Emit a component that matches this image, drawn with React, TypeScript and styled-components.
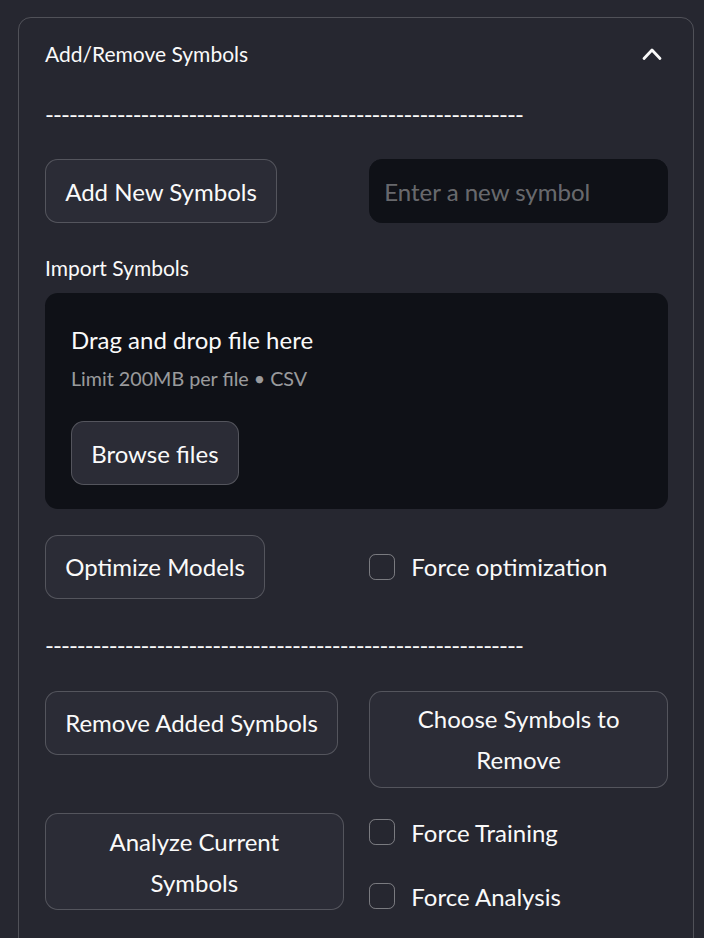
import React from "react";
import styled, { createGlobalStyle } from "styled-components";

const GlobalStyle = createGlobalStyle`
  html, body {
    margin: 0;
    padding: 0;
    background: #262730;
  }
  * { box-sizing: border-box; }
`;

const FONT = `"Lato", "Liberation Sans", sans-serif`;

const Page = styled.div`
  background: #262730;
  padding: 17px 10px 0 18px;
  font-family: ${FONT};
  color: rgb(250, 250, 250);
  min-height: 938px;
`;

const Expander = styled.section`
  border: 1px solid rgba(250, 250, 250, 0.2);
  border-radius: 12.8px;
`;

const Header = styled.div`
  height: 71px;
  padding: 0 31px 0 26px;
  display: flex;
  align-items: center;
  justify-content: space-between;
  font-size: 21px;
  line-height: 1;
`;

const Body = styled.div`
  padding: 3.5px 25px 48px 26px;
  display: flex;
  flex-direction: column;
  gap: 25.6px;
`;

const Dashes = styled.p`
  margin: 0;
  font-size: 24px;
  line-height: 41px;
  height: 41px;
  letter-spacing: -0.95px;
  white-space: nowrap;
  overflow: hidden;
`;

const Row = styled.div<{ $align?: string }>`
  display: grid;
  grid-template-columns: 1fr 1fr;
  column-gap: 25.6px;
  align-items: ${(p) => p.$align || "start"};
`;

const Cell = styled.div`
  display: flex;
  flex-direction: column;
  gap: 25.6px;
  min-width: 0;
`;

const Button = styled.button<{ $full?: boolean }>`
  font-family: ${FONT};
  font-size: 24px;
  line-height: 41px;
  color: rgb(250, 250, 250);
  background: #2b2c36;
  border: 1px solid rgba(250, 250, 250, 0.2);
  border-radius: 12.8px;
  min-height: 64px;
  padding: 6.4px 19.2px;
  text-align: center;
  align-self: flex-start;
  width: ${(p) => (p.$full ? "100%" : "auto")};
  max-width: 100%;
`;

const Input = styled.input`
  font-family: ${FONT};
  font-size: 24px;
  height: 64px;
  width: 100%;
  background: #0f1117;
  border: 1px solid #0f1117;
  border-radius: 12.8px;
  padding: 0 14px;
  color: rgb(250, 250, 250);
  outline: none;
  &::placeholder {
    color: rgba(250, 250, 250, 0.4);
  }
`;

const Uploader = styled.div`
  display: flex;
  flex-direction: column;
`;

const Label = styled.label`
  font-size: 21px;
  height: 38.4px;
  margin-bottom: 6.4px;
  display: flex;
  align-items: center;
`;

const Dropzone = styled.div`
  background: #0f1117;
  border-radius: 12.8px;
  padding: 25.6px 26px 24px;
  display: flex;
  flex-direction: column;
  align-items: flex-start;
`;

const DropTitle = styled.div`
  font-size: 24px;
  line-height: 41px;
`;

const DropHint = styled.div`
  font-size: 19.7px;
  line-height: 38px;
  color: rgba(250, 250, 250, 0.6);
  margin-bottom: 23px;
`;

const CheckRow = styled.label`
  display: flex;
  align-items: center;
  gap: 16px;
  height: 38.4px;
  font-size: 24px;
`;

const Box = styled.span`
  width: 26px;
  height: 26px;
  border: 1.5px solid rgba(250, 250, 250, 0.4);
  border-radius: 6.4px;
  flex: none;
`;

const Chevron = () => (
  <svg width="20" height="14" viewBox="0 0 20 14" fill="none">
    <polyline
      points="2,11.5 10,3 18,11.5"
      stroke="#fafafa"
      strokeWidth="2.8"
      strokeLinecap="round"
      strokeLinejoin="round"
    />
  </svg>
);

const Checkbox = ({ label }: { label: string }) => (
  <CheckRow>
    <Box />
    {label}
  </CheckRow>
);

const DASHES = "-".repeat(60);

export default function App() {
  return (
    <>
      <GlobalStyle />
      <Page>
        <Expander>
          <Header>
            <span>Add/Remove Symbols</span>
            <Chevron />
          </Header>
          <Body>
            <Dashes>{DASHES}</Dashes>
            <Row>
              <Cell>
                <Button>Add New Symbols</Button>
              </Cell>
              <Cell>
                <Input placeholder="Enter a new symbol" />
              </Cell>
            </Row>
            <Uploader>
              <Label>Import Symbols</Label>
              <Dropzone>
                <DropTitle>Drag and drop file here</DropTitle>
                <DropHint>Limit 200MB per file • CSV</DropHint>
                <Button>Browse files</Button>
              </Dropzone>
            </Uploader>
            <Row $align="center">
              <Cell>
                <Button>Optimize Models</Button>
              </Cell>
              <Cell>
                <Checkbox label="Force optimization" />
              </Cell>
            </Row>
            <Dashes>{DASHES}</Dashes>
            <Row>
              <Cell>
                <Button>Remove Added Symbols</Button>
              </Cell>
              <Cell>
                <Button $full>Choose Symbols to Remove</Button>
              </Cell>
            </Row>
            <Row>
              <Cell>
                <Button $full>Analyze Current Symbols</Button>
              </Cell>
              <Cell>
                <Checkbox label="Force Training" />
                <Checkbox label="Force Analysis" />
              </Cell>
            </Row>
          </Body>
        </Expander>
      </Page>
    </>
  );
}
